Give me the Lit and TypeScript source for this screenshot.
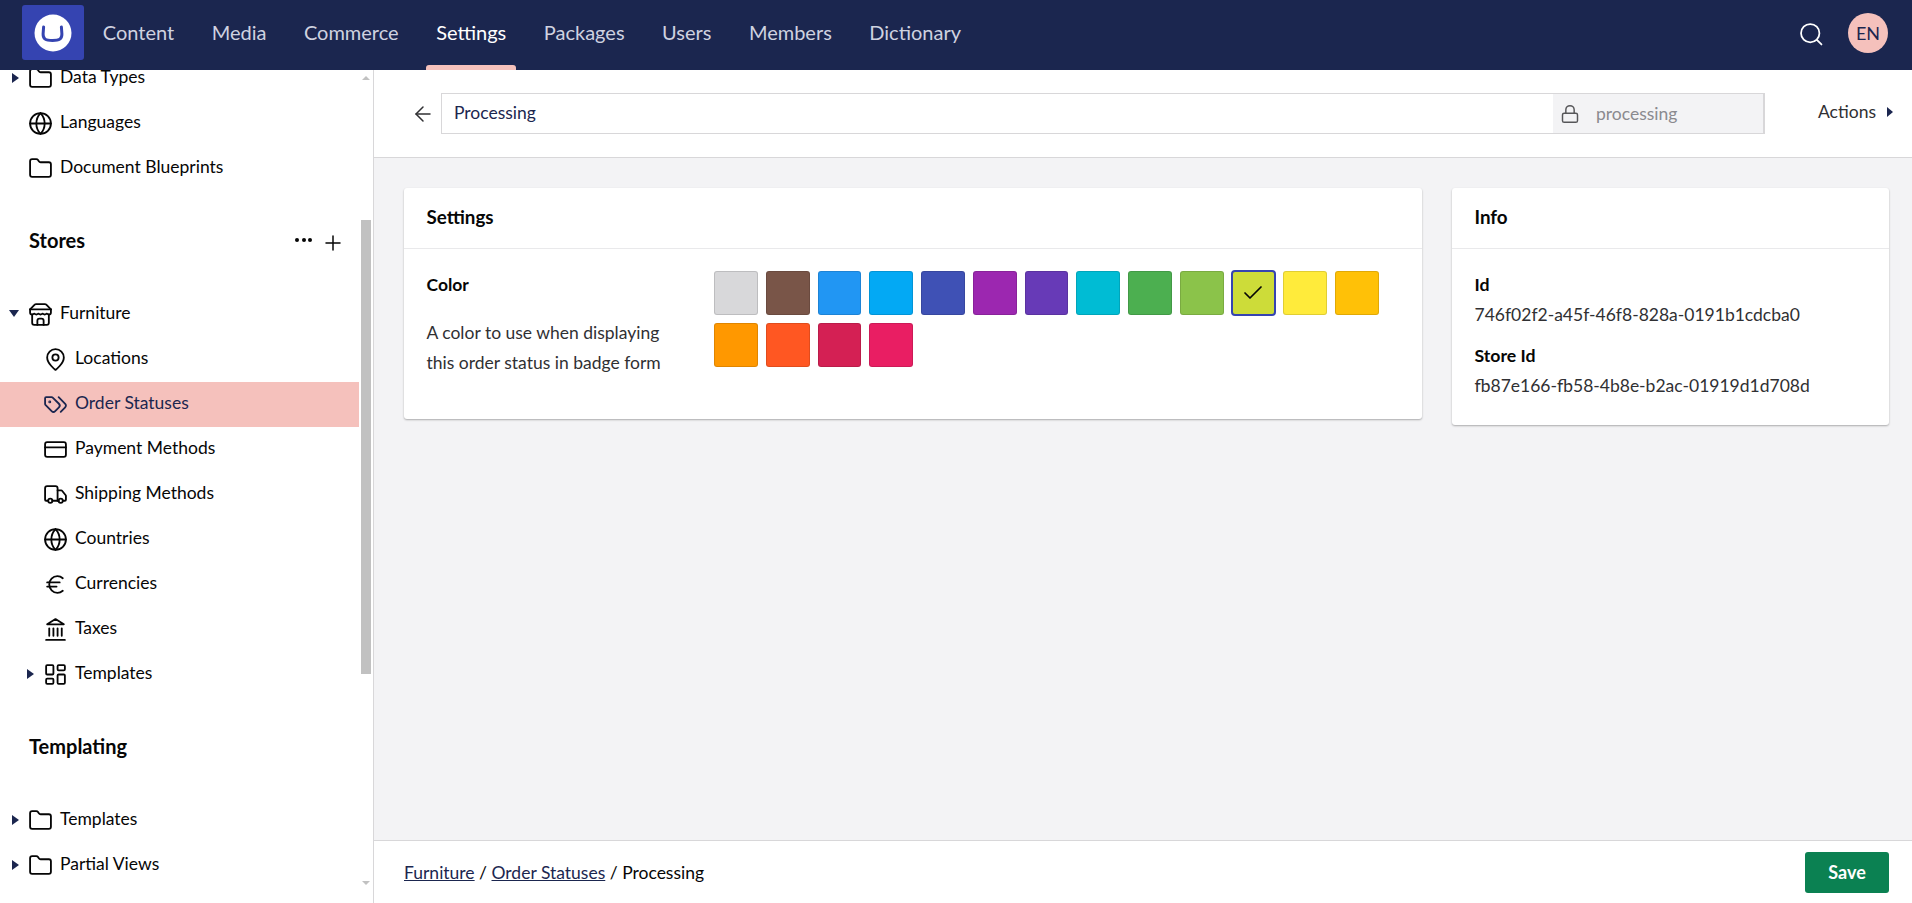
import { LitElement, css, html, svg } from "lit";
import { customElement } from "lit/decorators.js";

const icons: Record<string, unknown> = {
  folder: svg`<path d="M20 20a2 2 0 0 0 2-2V8a2 2 0 0 0-2-2h-7.9a2 2 0 0 1-1.69-.9L9.6 3.9A2 2 0 0 0 7.93 3H4a2 2 0 0 0-2 2v13a2 2 0 0 0 2 2Z"/>`,
  globe: svg`<circle cx="12" cy="12" r="10"/><path d="M12 2a14.5 14.5 0 0 0 0 20 14.5 14.5 0 0 0 0-20"/><path d="M2 12h20"/>`,
  store: svg`<path d="m2 7 4.41-4.41A2 2 0 0 1 7.83 2h8.34a2 2 0 0 1 1.42.59L22 7"/><path d="M4 12v8a2 2 0 0 0 2 2h12a2 2 0 0 0 2-2v-8"/><path d="M15 22v-4a2 2 0 0 0-2-2h-2a2 2 0 0 0-2 2v4"/><path d="M2 7h20"/><path d="M22 7v3a2 2 0 0 1-2 2a2.7 2.7 0 0 1-1.59-.63.7.7 0 0 0-.82 0A2.7 2.7 0 0 1 16 12a2.7 2.7 0 0 1-1.59-.63.7.7 0 0 0-.82 0A2.7 2.7 0 0 1 12 12a2.7 2.7 0 0 1-1.59-.63.7.7 0 0 0-.82 0A2.7 2.7 0 0 1 8 12a2.7 2.7 0 0 1-1.59-.63.7.7 0 0 0-.82 0A2.7 2.7 0 0 1 4 12a2 2 0 0 1-2-2V7"/>`,
  pin: svg`<path d="M20 10c0 6-8 12-8 12s-8-6-8-12a8 8 0 0 1 16 0Z"/><circle cx="12" cy="10" r="3"/>`,
  tags: svg`<path d="m15 5 6.3 6.3a2.4 2.4 0 0 1 0 3.4L17 19"/><path d="M9.586 5.586A2 2 0 0 0 8.172 5H3a1 1 0 0 0-1 1v5.172a2 2 0 0 0 .586 1.414L8.29 18.29a2.426 2.426 0 0 0 3.42 0l3.58-3.58a2.426 2.426 0 0 0 0-3.42z"/><circle cx="6.5" cy="9.5" r=".5"/>`,
  card: svg`<rect x="2" y="5" width="20" height="14" rx="2"/><path d="M2 10h20"/>`,
  truck: svg`<path d="M14 18V6a2 2 0 0 0-2-2H4a2 2 0 0 0-2 2v11a1 1 0 0 0 1 1h2"/><path d="M15 18H9"/><path d="M19 18h2a1 1 0 0 0 1-1v-3.65a1 1 0 0 0-.22-.624l-3.48-4.35A1 1 0 0 0 17.52 8H14"/><circle cx="17" cy="18" r="2"/><circle cx="7" cy="18" r="2"/>`,
  euro: svg`<path d="M4 10h12"/><path d="M4 14h9"/><path d="M19 6a7.7 7.7 0 0 0-5.2-2A7.9 7.9 0 0 0 6 12c0 4.4 3.5 8 7.8 8 2 0 3.8-.8 5.2-2"/>`,
  bank: svg`<path d="M3 22h18"/><path d="M6 18v-7"/><path d="M10 18v-7"/><path d="M14 18v-7"/><path d="M18 18v-7"/><path d="M12 2l8 5H4z"/>`,
  layout: svg`<rect x="3" y="3" width="7" height="9" rx="1"/><rect x="14" y="3" width="7" height="5" rx="1"/><rect x="14" y="12" width="7" height="9" rx="1"/><rect x="3" y="16" width="7" height="5" rx="1"/>`,
  search: svg`<circle cx="11" cy="11" r="9"/><path d="m22 22-4.5-4.5"/>`,
  lock: svg`<rect x="3" y="11" width="18" height="11" rx="2"/><path d="M7 11V7a5 5 0 0 1 10 0v4"/>`,
  back: svg`<path d="m12 19-7-7 7-7"/><path d="M19 12H5"/>`,
  check: svg`<path d="M20 6 9 17l-5-5"/>`,
  plus: svg`<path d="M5 12h14"/><path d="M12 5v14"/>`,
};

const icon = (name: string, cls = "") =>
  html`<svg class="icon ${cls}" viewBox="0 0 24 24">${icons[name]}</svg>`;

type TreeRow = { label: string; icon: string; caret?: "right" | "down"; child?: boolean; active?: boolean };

const topRows: TreeRow[] = [
  { label: "Data Types", icon: "folder", caret: "right" },
  { label: "Languages", icon: "globe" },
  { label: "Document Blueprints", icon: "folder" },
];
const storeRows: TreeRow[] = [
  { label: "Furniture", icon: "store", caret: "down" },
  { label: "Locations", icon: "pin", child: true },
  { label: "Order Statuses", icon: "tags", child: true, active: true },
  { label: "Payment Methods", icon: "card", child: true },
  { label: "Shipping Methods", icon: "truck", child: true },
  { label: "Countries", icon: "globe", child: true },
  { label: "Currencies", icon: "euro", child: true },
  { label: "Taxes", icon: "bank", child: true },
  { label: "Templates", icon: "layout", caret: "right", child: true },
];
const templatingRows: TreeRow[] = [
  { label: "Templates", icon: "folder", caret: "right" },
  { label: "Partial Views", icon: "folder", caret: "right" },
];

const navItems = ["Content", "Media", "Commerce", "Settings", "Packages", "Users", "Members", "Dictionary"];

const swatches = [
  "#d8d8da", "#795548", "#2196f3", "#03a9f4", "#3f51b5", "#9c27b0", "#673ab7", "#00bcd4", "#4caf50",
  "#8bc34a", "#cddc39", "#ffeb3b", "#ffc107", "#ff9800", "#ff5722", "#d42054", "#e91e63",
];
const selectedSwatch = "#cddc39";

@customElement("app-root")
export class AppRoot extends LitElement {
  static styles = css`
    :host {
      display: flex;
      flex-direction: column;
      height: 100vh;
      overflow: hidden;
      font-family: Lato, "Noto Sans", sans-serif;
      font-size: 17.5px;
      color: #1b264f;
    }
    .icon {
      width: 25px;
      height: 25px;
      flex: none;
      fill: none;
      stroke: currentColor;
      stroke-width: 1.75;
      stroke-linecap: round;
      stroke-linejoin: round;
    }

    /* top bar */
    .topbar {
      flex: none;
      height: 70px;
      display: flex;
      align-items: flex-start;
      background: #1b264f;
      padding-left: 22px;
      padding-right: 24px;
    }
    .logo {
      width: 62px;
      height: 55px;
      margin-top: 5px;
      flex: none;
      border-radius: 3px;
      background: #3544b1;
      display: flex;
      align-items: center;
      justify-content: center;
    }
    .logo svg {
      width: 38px;
      height: 38px;
    }
    .nav {
      display: flex;
      flex: 1;
    }
    .nav-item {
      position: relative;
      height: 64px;
      display: flex;
      align-items: center;
      padding: 0 18.75px;
      font-size: 20px;
      color: #cfd2e0;
    }
    .nav-item.active {
      color: #fff;
    }
    .nav-item.active::after {
      content: "";
      position: absolute;
      left: 9px;
      right: 9px;
      top: 65px;
      height: 5px;
      background: #f5c1bc;
      border-radius: 3px 3px 0 0;
    }
    .search {
      width: 24.5px;
      height: 24.5px;
      margin-top: 22px;
      color: #fff;
    }
    .avatar {
      width: 40px;
      height: 40px;
      margin-top: 13px;
      margin-left: 25px;
      border-radius: 50%;
      background: #f5c1bc;
      color: #1b264f;
      font-size: 18px;
      display: flex;
      align-items: center;
      justify-content: center;
    }

    .shell {
      flex: 1;
      min-height: 0;
      display: flex;
    }

    /* sidebar */
    .sidebar {
      width: 373px;
      flex: none;
      display: flex;
      background: #fff;
      border-right: 1px solid #d8d7d9;
      box-sizing: content-box;
    }
    .tree-clip {
      flex: 1;
      overflow: hidden;
    }
    .tree {
      margin-top: -14px;
    }
    .row {
      height: 45px;
      display: flex;
      align-items: center;
      padding-left: 9px;
      color: #060606;
    }
    .row.child {
      padding-left: 24px;
    }
    .row.active {
      background: #f5c1bc;
      color: #1b264f;
    }
    .row .icon {
      margin-left: -2px;
    }
    .caret-box {
      width: 21px;
      flex: none;
      display: flex;
      align-items: center;
    }
    .caret-right {
      margin-left: 3px;
      margin-top: -2px;
      border-left: 7px solid #1b264f;
      border-top: 5.5px solid transparent;
      border-bottom: 5.5px solid transparent;
    }
    .caret-down {
      margin-top: -2px;
      border-top: 7px solid #1b264f;
      border-left: 5.5px solid transparent;
      border-right: 5.5px solid transparent;
    }
    .row .label {
      margin-left: 7px;
      margin-top: -4px;
    }
    .section-head {
      height: 101px;
      display: flex;
      align-items: center;
      padding-left: 29px;
      padding-right: 14px;
      font-size: 20px;
      font-weight: 700;
      color: #060606;
    }
    .section-head span {
      flex: 1;
      margin-top: -3px;
    }
    .dots {
      display: flex;
      gap: 2.5px;
      margin-right: 9px;
      margin-top: -3px;
    }
    .dots i {
      width: 4px;
      height: 4px;
      border-radius: 50%;
      background: #060606;
    }
    .plus {
      width: 24px;
      height: 24px;
      margin-top: 2px;
      stroke-width: 1.5;
    }
    .scrollbar {
      width: 12px;
      margin-left: 2px;
      flex: none;
      display: flex;
      flex-direction: column;
      align-items: center;
      padding-right: 2px;
      box-sizing: border-box;
    }
    .thumb {
      width: 100%;
      height: 454px;
      margin-top: 140px;
      background: #c1c1c1;
    }
    .arrow-up {
      margin-top: 6px;
      border-bottom: 4px solid #c1c1c1;
      border-left: 4px solid transparent;
      border-right: 4px solid transparent;
    }
    .arrow-down {
      margin-top: 207px;
      border-top: 4px solid #c1c1c1;
      border-left: 4px solid transparent;
      border-right: 4px solid transparent;
    }

    /* workspace */
    .workspace {
      flex: 1;
      min-width: 0;
      display: flex;
      flex-direction: column;
      background: #f3f3f5;
    }
    .ws-head {
      flex: none;
      height: 88px;
      box-sizing: border-box;
      display: flex;
      align-items: flex-start;
      background: #fff;
      border-bottom: 1px solid #d8d7d9;
      padding-left: 37px;
      padding-top: 23px;
    }
    .back {
      width: 24px;
      height: 24px;
      margin-top: 9px;
      color: #303033;
      stroke-width: 1.5;
    }
    .name-input {
      width: 1324px;
      height: 41px;
      margin-left: 6px;
      box-sizing: border-box;
      display: flex;
      border: 1px solid #d8d7d9;
      background: #fff;
    }
    .name-text {
      flex: 1;
      padding-left: 12px;
      line-height: 37px;
      color: #1b264f;
    }
    .alias {
      width: 211px;
      box-sizing: border-box;
      display: flex;
      align-items: center;
      background: #f3f3f5;
      border-right: 1px solid #d8d7d9;
      padding-left: 7px;
      color: #8a8a8f;
    }
    .alias .icon {
      width: 20px;
      height: 20px;
      color: #303033;
      opacity: 0.8;
    }
    .alias span {
      margin-left: 16px;
      margin-top: -1px;
    }
    .actions {
      margin-left: 53px;
      margin-top: 8px;
      display: flex;
      align-items: center;
      color: #303033;
    }
    .actions i {
      margin-left: 11px;
      border-left: 6px solid #1b264f;
      border-top: 5px solid transparent;
      border-bottom: 5px solid transparent;
    }
    .ws-body {
      flex: 1;
      min-height: 0;
      display: grid;
      grid-template-columns: 1018px 437px;
      gap: 30px;
      align-items: start;
      padding: 30px 23px 0 30px;
    }
    .card {
      background: #fff;
      border-radius: 3px;
      box-shadow: 0 1px 2px rgba(0, 0, 0, 0.3);
      color: #060606;
    }
    .card-head {
      height: 60px;
      display: flex;
      align-items: center;
      padding: 0 22.5px;
      font-size: 18.8px;
      font-weight: 700;
      border-bottom: 1px solid #e9e9eb;
    }
    .card-head span {
      margin-top: -4px;
    }
    .settings-body {
      display: flex;
      padding: 22px 22px 41px 22.5px;
    }
    .prop {
      width: 287.5px;
      flex: none;
    }
    .prop-label {
      font-weight: 700;
      line-height: 30px;
      margin-top: -1px;
    }
    .prop-desc {
      margin-top: 18px;
      line-height: 30px;
      color: #303033;
    }
    .swatches {
      display: grid;
      grid-template-columns: repeat(13, 43.75px);
      grid-auto-rows: 44px;
      gap: 8px;
    }
    .swatch {
      box-sizing: border-box;
      border-radius: 3px;
      border: 1px solid rgba(0, 0, 0, 0.12);
      display: flex;
      align-items: center;
      justify-content: center;
    }
    .swatch.selected {
      outline: 2px solid #3544b1;
      outline-offset: -1px;
      border-color: transparent;
    }
    .swatch .icon {
      width: 24px;
      height: 24px;
      color: #060606;
    }
    .info-body {
      padding: 21px 22.5px 24px;
      line-height: 30px;
    }
    .info-label {
      font-weight: 700;
      font-size: 17.7px;
    }
    .info-value {
      margin-bottom: 11px;
      color: #303033;
    }
    .info-value:last-child {
      margin-bottom: 0;
    }

    /* footer */
    .footer {
      flex: none;
      height: 63px;
      box-sizing: border-box;
      display: flex;
      align-items: center;
      justify-content: space-between;
      background: #fff;
      border-top: 1px solid #d8d7d9;
      padding: 0 23px 0 30px;
      color: #060606;
    }
    .crumbs a {
      color: #1b264f;
      text-decoration: underline;
    }
    .save {
      width: 84px;
      height: 41px;
      border-radius: 3px;
      background: #0b8152;
      color: #fff;
      font-size: 18px;
      font-weight: 700;
      display: flex;
      align-items: center;
      justify-content: center;
    }
  `;

  private renderRow(r: TreeRow) {
    return html`
      <div class="row ${r.child ? "child" : ""} ${r.active ? "active" : ""}">
        <div class="caret-box">${r.caret ? html`<i class="caret-${r.caret}"></i>` : ""}</div>
        ${icon(r.icon)}
        <span class="label">${r.label}</span>
      </div>
    `;
  }

  private renderSidebar() {
    return html`
      <aside class="sidebar">
        <div class="tree-clip">
          <div class="tree">
            ${topRows.map((r) => this.renderRow(r))}
            <div class="section-head">
              <span>Stores</span>
              <div class="dots"><i></i><i></i><i></i></div>
              ${icon("plus", "plus")}
            </div>
            ${storeRows.map((r) => this.renderRow(r))}
            <div class="section-head"><span>Templating</span></div>
            ${templatingRows.map((r) => this.renderRow(r))}
          </div>
        </div>
        <div class="scrollbar">
          <i class="arrow-up"></i>
          <div class="thumb"></div>
          <i class="arrow-down"></i>
        </div>
      </aside>
    `;
  }

  render() {
    return html`
      <header class="topbar">
        <div class="logo">
          <svg viewBox="0 0 38 38">
            <circle cx="19" cy="19" r="18.5" fill="#fff" />
            <path d="M9.6 13 L9.1 20 C9 25 11.5 26.5 18.5 26.5 S28 25 27.9 20 L27.4 13" fill="none" stroke="#3544b1" stroke-width="3" stroke-linecap="round" />
          </svg>
        </div>
        <nav class="nav">
          ${navItems.map((n) => html`<div class="nav-item ${n === "Settings" ? "active" : ""}">${n}</div>`)}
        </nav>
        ${icon("search", "search")}
        <div class="avatar">EN</div>
      </header>
      <div class="shell">
        ${this.renderSidebar()}
        <main class="workspace">
          <div class="ws-head">
            ${icon("back", "back")}
            <div class="name-input">
              <div class="name-text">Processing</div>
              <div class="alias">${icon("lock")}<span>processing</span></div>
            </div>
            <div class="actions">Actions<i></i></div>
          </div>
          <div class="ws-body">
            <section class="card">
              <div class="card-head"><span>Settings</span></div>
              <div class="settings-body">
                <div class="prop">
                  <div class="prop-label">Color</div>
                  <div class="prop-desc">A color to use when displaying<br />this order status in badge form</div>
                </div>
                <div class="swatches">
                  ${swatches.map(
                    (c) => html`<div class="swatch ${c === selectedSwatch ? "selected" : ""}" style="background:${c}">
                      ${c === selectedSwatch ? icon("check") : ""}
                    </div>`
                  )}
                </div>
              </div>
            </section>
            <section class="card">
              <div class="card-head"><span>Info</span></div>
              <div class="info-body">
                <div class="info-label">Id</div>
                <div class="info-value">746f02f2-a45f-46f8-828a-0191b1cdcba0</div>
                <div class="info-label">Store Id</div>
                <div class="info-value">fb87e166-fb58-4b8e-b2ac-01919d1d708d</div>
              </div>
            </section>
          </div>
          <footer class="footer">
            <div class="crumbs"><a>Furniture</a> / <a>Order Statuses</a> / Processing</div>
            <div class="save">Save</div>
          </footer>
        </main>
      </div>
    `;
  }
}
